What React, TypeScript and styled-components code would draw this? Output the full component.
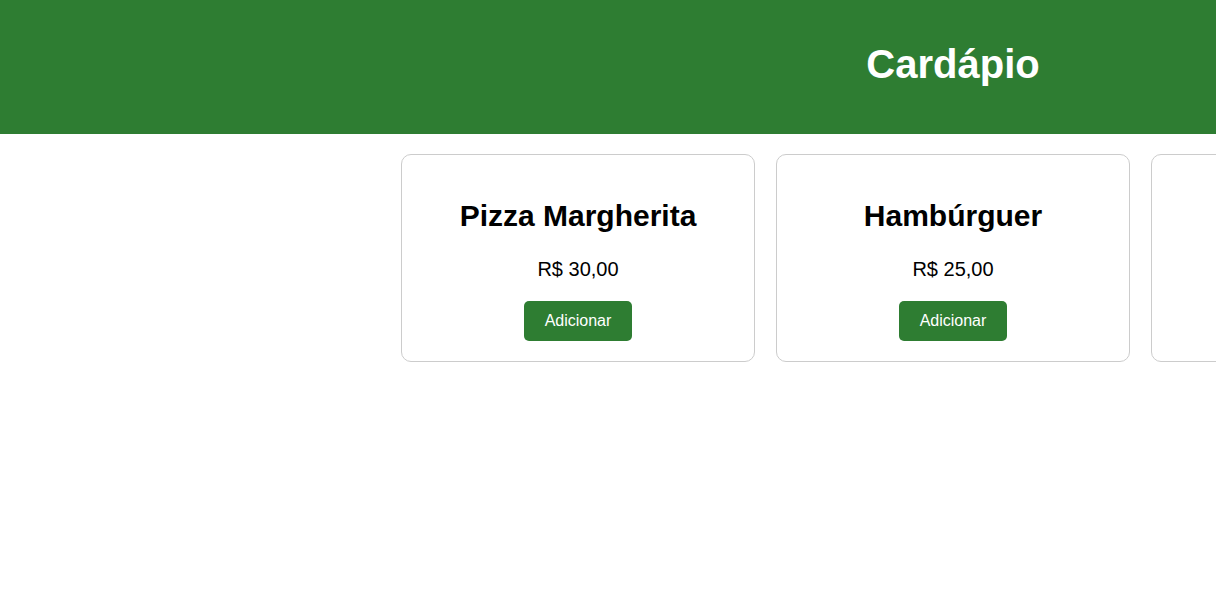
import React from "react";
import styled, { createGlobalStyle } from "styled-components";

const GlobalStyle = createGlobalStyle`
  html, body {
    margin: 0;
    padding: 0;
    background: #ffffff;
    font-family: "Liberation Sans", Arial, sans-serif;
    overflow: hidden;
  }
`;

const Page = styled.div`
  width: 1906px;
`;

const Header = styled.header`
  box-sizing: border-box;
  height: 134px;
  padding-bottom: 6px;
  background: #2e7d32;
  display: flex;
  align-items: center;
  justify-content: center;
`;

const Title = styled.h1`
  margin: 0;
  color: #ffffff;
  font-size: 40px;
  font-weight: 700;
  line-height: 46px;
`;

const Menu = styled.main`
  display: flex;
  justify-content: center;
  gap: 21px;
  padding-top: 20px;
`;

const Card = styled.div`
  width: 354px;
  box-sizing: border-box;
  border: 1px solid #cccccc;
  border-radius: 10px;
  padding: 20px;
  display: flex;
  flex-direction: column;
  align-items: center;
  text-align: center;
`;

const ItemName = styled.h2`
  margin: 24px 0 0;
  font-size: 30px;
  font-weight: 700;
  line-height: 34px;
  color: #000000;
`;

const Price = styled.p`
  margin: 25px 0 0;
  font-size: 20px;
  line-height: 23px;
  color: #000000;
`;

const AddButton = styled.button`
  margin-top: 20px;
  height: 40px;
  padding: 0 21px;
  border: none;
  border-radius: 5px;
  background: #2e7d32;
  color: #ffffff;
  font-family: "Liberation Sans", Arial, sans-serif;
  font-size: 16px;
  cursor: pointer;
`;

const items = [
  { name: "Pizza Margherita", price: "R$ 30,00" },
  { name: "Hambúrguer", price: "R$ 25,00" },
  { name: "Refrigerante", price: "R$ 8,00" },
];

export default function App() {
  return (
    <Page>
      <GlobalStyle />
      <Header>
        <Title>Cardápio</Title>
      </Header>
      <Menu>
        {items.map((item) => (
          <Card key={item.name}>
            <ItemName>{item.name}</ItemName>
            <Price>{item.price}</Price>
            <AddButton>Adicionar</AddButton>
          </Card>
        ))}
      </Menu>
    </Page>
  );
}
